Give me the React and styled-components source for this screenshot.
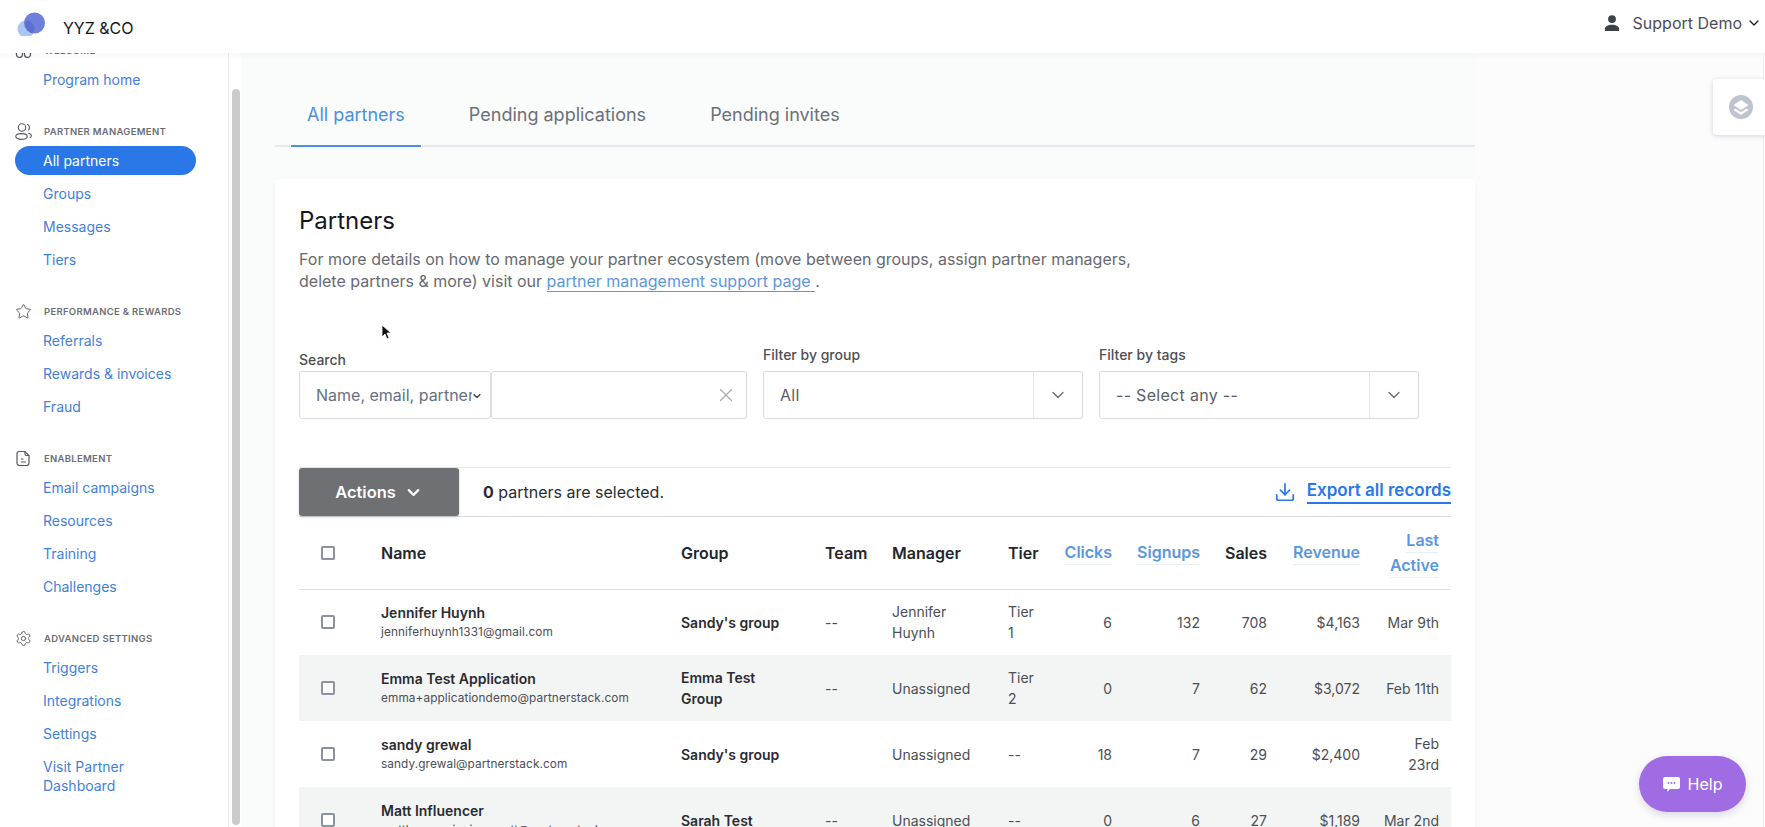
import React from 'react';
import styled, { createGlobalStyle } from 'styled-components';
import { ChevronDown, X, Settings, Star, Download } from 'lucide-react';

const GlobalStyle = createGlobalStyle`
  html, body {
    margin: 0;
    height: 100%;
    overflow: hidden;
    background: #fff;
    font-family: Inter, "Noto Sans", sans-serif;
  }
  * { box-sizing: border-box; }
`;

const Page = styled.div`
  position: relative;
  display: flex;
  flex-direction: column;
  height: 827px;
  overflow: hidden;
`;

const Header = styled.header`
  position: relative;
  z-index: 2;
  flex: 0 0 53px;
  height: 53px;
  display: flex;
  align-items: center;
  justify-content: space-between;
  padding: 3px 3px 0 17px;
  background: #fff;
  box-shadow: 0 1px 8px rgba(30, 40, 70, 0.05);
`;

const Brand = styled.div`
  display: flex;
  align-items: center;
  gap: 16px;
  font-size: 16px;
  color: #15171c;
`;

const LogoSvg = styled.svg`
  margin-bottom: 10px;
`;

const UserMenu = styled.div`
  display: flex;
  align-items: center;
  align-self: flex-start;
  height: 46px;
  margin-top: -3px;
  font-size: 16px;
  color: #4a4d55;
  svg:first-child { margin-right: 13px; }
  svg:last-child { margin-left: 4px; color: #222; }
`;

const Body = styled.div`
  flex: 1;
  display: flex;
  min-height: 0;
`;

const Sidebar = styled.aside`
  flex: 0 0 229px;
  overflow: hidden;
  background: #fff;
  border-right: 1px solid #e8eaee;
`;

const SideInner = styled.div`
  margin-top: -11px;
`;

const SideSection = styled.section`
  margin-bottom: 29px;
`;

const SideHeading = styled.div`
  display: flex;
  align-items: center;
  gap: 12px;
  height: 16px;
  padding-left: 15px;
  margin-bottom: 7px;
  font-size: 9.5px;
  font-weight: 600;
  letter-spacing: 0.3px;
  text-transform: uppercase;
  color: #6b6e75;
  svg { flex: none; color: #55585f; }
`;

const NavItem = styled.a`
  display: block;
  width: 181px;
  margin: 0 0 4px 15px;
  padding: 5px 14px 5px 28px;
  border-radius: 15px;
  font-size: 14px;
  line-height: 19px;
  color: ${(p) => (p.$active ? '#fff' : '#3f7fdc')};
  background: ${(p) => (p.$active ? '#2a78e8' : 'transparent')};
`;

const ScrollTrack = styled.div`
  flex: 0 0 12px;
  padding: 36px 1px 2px 3px;
  background: #fff;
  &::before {
    content: '';
    display: block;
    height: 100%;
    border-radius: 4px;
    background: #cbcbcb;
  }
`;

const Main = styled.main`
  flex: 1;
  min-width: 0;
  display: flex;
  margin-right: 1px;
  background: #fcfcfd;
  border-right: 1px solid #eceef1;
`;

const Content = styled.div`
  flex: 0 0 1234px;
  padding: 0 0 0 34px;
  background: #fafbfb;
`;

const Tabs = styled.nav`
  display: flex;
  height: 94px;
  align-items: flex-end;
  width: 1200px;
  padding-left: 16px;
  border-bottom: 2px solid #e6e9ef;
  margin-bottom: 32px;
`;

const Tab = styled.a`
  height: 51px;
  padding: 7px 16px 0;
  margin-right: 32px;
  margin-bottom: -2px;
  font-size: 18px;
  line-height: 24px;
  color: ${(p) => (p.$active ? '#4c8fe0' : '#6d7078')};
  border-bottom: 2px solid ${(p) => (p.$active ? '#4c8fe0' : 'transparent')};
`;

const Card = styled.div`
  width: 1200px;
  padding: 26px 24px 0;
  background: #fff;
  border-radius: 4px;
  box-shadow: 0 1px 6px rgba(30, 40, 70, 0.04);
`;

const Title = styled.h1`
  margin: 0 0 11px;
  font-size: 24px;
  line-height: 32px;
  font-weight: 400;
  color: #15171c;
`;

const Intro = styled.p`
  margin: 0 0 55px;
  width: 860px;
  font-size: 16px;
  line-height: 22px;
  color: #676a71;
  a {
    color: #5c97dd;
    border-bottom: 1px solid #5c97dd;
  }
`;

const Filters = styled.div`
  display: flex;
  align-items: flex-end;
  margin-bottom: 48px;
`;

const Field = styled.div`
  width: ${(p) => p.$width}px;
  margin-right: ${(p) => p.$gap || 0}px;
`;

const FieldLabel = styled.div`
  margin-bottom: ${(p) => p.$below || 8}px;
  font-size: 14px;
  line-height: 16px;
  font-weight: 500;
  color: #4c4f56;
`;

const InputBox = styled.div`
  display: flex;
  align-items: center;
  height: 48px;
  background: #fff;
  border: 1px solid #d9dce2;
  border-radius: 3px;
  color: #5b5e66;
  font-size: 16px;
`;

const SearchSelect = styled(InputBox)`
  position: relative;
  padding: 0 18px 0 16px;
  color: #667085;
  svg {
    position: absolute;
    right: 7px;
    top: 18px;
    color: #333;
  }
`;

const SearchText = styled.span`
  overflow: hidden;
  white-space: nowrap;
`;

const ClearInput = styled(InputBox)`
  justify-content: flex-end;
  padding-right: 9px;
  svg { color: #a9acb2; }
`;

const SelectValue = styled.div`
  flex: 1;
  padding-left: ${(p) => p.$pad}px;
  letter-spacing: 0.3px;
`;

const SelectCaret = styled.div`
  flex: 0 0 49px;
  height: 100%;
  display: flex;
  align-items: center;
  justify-content: center;
  border-left: 1px solid #e2e4e9;
  color: #666a72;
`;

const ActionBar = styled.div`
  display: flex;
  align-items: center;
  height: 50px;
  border-top: 1px solid #e6e9ef;
  border-bottom: 1px solid #d9dce2;
`;

const ActionsButton = styled.button`
  display: flex;
  align-items: center;
  justify-content: center;
  gap: 8px;
  width: 160px;
  height: 48px;
  margin-right: 24px;
  border: 0;
  border-radius: 3px;
  background: #6f7074;
  color: #fff;
  font-family: inherit;
  font-size: 16.5px;
  font-weight: 600;
  box-shadow: 0 1px 3px rgba(0, 0, 0, 0.18);
`;

const Selected = styled.div`
  flex: 1;
  font-size: 16px;
  color: #2a2c31;
  b { font-weight: 700; }
`;

const ExportLink = styled.a`
  display: flex;
  align-items: center;
  gap: 11px;
  font-size: 17px;
  font-weight: 600;
  color: #2a78e8;
  span {
    padding-bottom: 2px;
    border-bottom: 2px solid #2a78e8;
  }
`;

const Table = styled.table`
  width: 1152px;
  table-layout: fixed;
  border-collapse: collapse;
`;

const Th = styled.th`
  height: 72px;
  padding: 0 ${(p) => p.$padRight || 0}px 0 0;
  border-bottom: 1px solid #dfe1e6;
  font-size: 16px;
  line-height: 24px;
  font-weight: 600;
  text-align: ${(p) => (p.$right ? 'right' : 'left')};
  color: ${(p) => (p.$link ? '#5c97dd' : '#24262b')};
`;

const SortLabel = styled.span`
  display: inline-block;
  border-bottom: 1px solid #e7f0f8;
  line-height: 23px;
`;

const Tr = styled.tr`
  height: 66px;
  background: ${(p) => (p.$alt ? '#f3f5f5' : '#fff')};
`;

const Td = styled.td`
  padding: 0 ${(p) => p.$padRight || 0}px 0 ${(p) => p.$padLeft || 0}px;
  font-size: 14px;
  line-height: 21px;
  vertical-align: middle;
  text-align: ${(p) => (p.$right ? 'right' : 'left')};
  font-weight: ${(p) => (p.$bold ? 600 : 400)};
  color: ${(p) => (p.$bold ? '#2a2c31' : '#4b4e55')};
`;

const CheckBox = styled.span`
  display: block;
  width: 14px;
  height: 14px;
  margin-left: 22px;
  border: 2px solid #8b92a0;
  border-radius: 2px;
  background: #fff;
`;

const PartnerName = styled.div`
  font-size: 14px;
  line-height: 20px;
  font-weight: 600;
  color: #2a2c31;
`;

const PartnerEmail = styled.div`
  font-size: 11.8px;
  line-height: 18px;
  letter-spacing: 0.1px;
  color: #4b4e55;
`;

const SideTab = styled.div`
  position: absolute;
  top: 79px;
  right: 0;
  width: 52px;
  height: 56px;
  display: flex;
  align-items: center;
  padding-left: 16px;
  background: #fff;
  border-radius: 3px 0 0 3px;
  box-shadow: 0 1px 5px rgba(30, 40, 70, 0.18);
`;

const HelpButton = styled.button`
  position: absolute;
  right: 19px;
  bottom: 15px;
  width: 107px;
  height: 56px;
  display: flex;
  align-items: center;
  justify-content: center;
  gap: 8px;
  border: 0;
  border-radius: 28px;
  background: #9f6ce3;
  color: #fff;
  font-family: inherit;
  font-size: 16px;
  box-shadow: 0 3px 8px rgba(60, 50, 120, 0.18);
`;

const Pointer = styled.svg`
  position: absolute;
  left: 381px;
  top: 324px;
`;

const LogoMark = () => (
  <LogoSvg width="30" height="26" viewBox="0 0 30 26">
    <circle cx="9" cy="19" r="8.5" fill="#a9c5f2" />
    <circle cx="17.5" cy="13" r="10.5" fill="#6f7fdc" />
    <path d="M8.5 10.5 A8.5 8.5 0 0 1 17.5 19 A8.5 8.5 0 0 1 15.5 23.4 A10.5 10.5 0 0 1 8.5 10.5 Z" fill="#5a70cf" />
  </LogoSvg>
);

const PersonIcon = () => (
  <svg width="16" height="16" viewBox="0 0 18 18" fill="#3f4248">
    <circle cx="9" cy="4.6" r="4.4" />
    <path d="M1 18v-2.6C1 12.4 5.6 11 9 11s8 1.4 8 4.4V18z" />
  </svg>
);

const LayersBadge = () => (
  <svg width="24" height="24" viewBox="0 0 24 24">
    <circle cx="12" cy="12" r="12" fill="#bdc4cf" />
    <path d="M12 5 L19.5 10 L12 15 L4.5 10 Z" fill="#fff" />
    <path d="M6.5 13.5 L12 17.2 L17.5 13.5 L19.5 15 L12 20 L4.5 15 Z" fill="#fff" />
  </svg>
);

const ChatIcon = () => (
  <svg width="17" height="15" viewBox="0 0 17 15">
    <path d="M2 0h13a2 2 0 0 1 2 2v8a2 2 0 0 1-2 2H7l-2.5 3v-3H2a2 2 0 0 1-2-2V2a2 2 0 0 1 2-2z" fill="#fff" />
    <circle cx="5.5" cy="6" r="1" fill="#9f6ce3" />
    <circle cx="8.5" cy="6" r="1" fill="#9f6ce3" />
    <circle cx="11.5" cy="6" r="1" fill="#9f6ce3" />
  </svg>
);

const WelcomeIcon = () => (
  <svg width="17" height="16" viewBox="0 0 17 16" fill="none" stroke="#55585f" strokeWidth="1.3">
    <path d="M1.5 1h6v11.5a3 3 0 0 1-6 0zM9.5 1h6v11.5a3 3 0 0 1-6 0z" />
    <path d="M7.5 8h2" />
  </svg>
);

const PeopleIcon = () => (
  <svg width="17" height="17" viewBox="0 0 17 17" fill="none" stroke="#55585f" strokeWidth="1.1">
    <circle cx="7" cy="4.5" r="3.7" />
    <ellipse cx="6.5" cy="13.5" rx="5.7" ry="2.9" />
    <path d="M12 1.2a3.6 3.6 0 0 1 1.2 6.2M13.5 10.2c1.8.5 2.9 1.5 2.9 2.6 0 .8-.6 1.6-1.7 2.1" />
  </svg>
);

const NoteIcon = () => (
  <svg width="17" height="17" viewBox="0 0 17 17" fill="none" stroke="#55585f" strokeWidth="1.2">
    <path d="M4 1.5h6l4 4V13a2.5 2.5 0 0 1-2.5 2.5h-7A2.5 2.5 0 0 1 2 13V3.5a2 2 0 0 1 2-2z" />
    <path d="M10 1.5v2.2A1.8 1.8 0 0 0 11.8 5.5H14M6 9h2.5M6 12h5" />
  </svg>
);

const sections = [
  {
    title: 'Welcome',
    icon: <WelcomeIcon />,
    items: ['Program home'],
  },
  {
    title: 'Partner management',
    icon: <PeopleIcon />,
    items: ['All partners', 'Groups', 'Messages', 'Tiers'],
  },
  {
    title: 'Performance & rewards',
    icon: <Star size={17} strokeWidth={1.3} />,
    items: ['Referrals', 'Rewards & invoices', 'Fraud'],
  },
  {
    title: 'Enablement',
    icon: <NoteIcon />,
    items: ['Email campaigns', 'Resources', 'Training', 'Challenges'],
  },
  {
    title: 'Advanced settings',
    icon: <Settings size={17} strokeWidth={1.3} />,
    items: ['Triggers', 'Integrations', 'Settings', 'Visit Partner Dashboard'],
  },
];

const partners = [
  {
    name: 'Jennifer Huynh',
    email: 'jenniferhuynh1331@gmail.com',
    group: "Sandy's group",
    team: '--',
    manager: 'Jennifer Huynh',
    tier: 'Tier 1',
    clicks: 6,
    signups: 132,
    sales: 708,
    revenue: '$4,163',
    active: 'Mar 9th',
  },
  {
    name: 'Emma Test Application',
    email: 'emma+applicationdemo@partnerstack.com',
    group: 'Emma Test Group',
    team: '--',
    manager: 'Unassigned',
    tier: 'Tier 2',
    clicks: 0,
    signups: 7,
    sales: 62,
    revenue: '$3,072',
    active: 'Feb 11th',
  },
  {
    name: 'sandy grewal',
    email: 'sandy.grewal@partnerstack.com',
    group: "Sandy's group",
    team: '',
    manager: 'Unassigned',
    tier: '--',
    clicks: 18,
    signups: 7,
    sales: 29,
    revenue: '$2,400',
    active: 'Feb 23rd',
  },
  {
    name: 'Matt Influencer',
    email: 'matthew.pasienisz+matt@partnerstack.com',
    group: 'Sarah Test',
    team: '--',
    manager: 'Unassigned',
    tier: '--',
    clicks: 0,
    signups: 6,
    sales: 27,
    revenue: '$1,189',
    active: 'Mar 2nd',
  },
];

const App = () => (
  <Page>
    <GlobalStyle />
    <Header>
      <Brand>
        <LogoMark />
        YYZ &amp;CO
      </Brand>
      <UserMenu>
        <PersonIcon />
        Support Demo
        <ChevronDown size={16} strokeWidth={2} />
      </UserMenu>
    </Header>
    <Body>
      <Sidebar>
        <SideInner>
          {sections.map((section) => (
            <SideSection key={section.title}>
              <SideHeading>
                {section.icon}
                {section.title}
              </SideHeading>
              {section.items.map((item) => (
                <NavItem key={item} $active={item === 'All partners'}>
                  {item}
                </NavItem>
              ))}
            </SideSection>
          ))}
        </SideInner>
      </Sidebar>
      <ScrollTrack />
      <Main>
        <Content>
          <Tabs>
            <Tab $active>All partners</Tab>
            <Tab>Pending applications</Tab>
            <Tab>Pending invites</Tab>
          </Tabs>
          <Card>
            <Title>Partners</Title>
            <Intro>
              For more details on how to manage your partner ecosystem (move between groups, assign
              partner managers, delete partners &amp; more) visit our{' '}
              <a>partner management support page </a> .
            </Intro>
            <Filters>
              <Field $width={192}>
                <FieldLabel $below={3}>Search</FieldLabel>
                <SearchSelect>
                  <SearchText>Name, email, partner key</SearchText>
                  <ChevronDown size={12} strokeWidth={2.2} />
                </SearchSelect>
              </Field>
              <Field $width={256} $gap={16}>
                <ClearInput>
                  <X size={22} strokeWidth={1.3} />
                </ClearInput>
              </Field>
              <Field $width={320} $gap={16}>
                <FieldLabel>Filter by group</FieldLabel>
                <InputBox>
                  <SelectValue $pad={16}>All</SelectValue>
                  <SelectCaret>
                    <ChevronDown size={20} strokeWidth={1.6} />
                  </SelectCaret>
                </InputBox>
              </Field>
              <Field $width={320}>
                <FieldLabel>Filter by tags</FieldLabel>
                <InputBox>
                  <SelectValue $pad={16}>-- Select any --</SelectValue>
                  <SelectCaret>
                    <ChevronDown size={20} strokeWidth={1.6} />
                  </SelectCaret>
                </InputBox>
              </Field>
            </Filters>
            <ActionBar>
              <ActionsButton>
                Actions
                <ChevronDown size={19} strokeWidth={2.8} />
              </ActionsButton>
              <Selected>
                <b>0</b> partners are selected.
              </Selected>
              <ExportLink>
                <Download size={22} strokeWidth={1.9} />
                <span>Export all records</span>
              </ExportLink>
            </ActionBar>
            <Table>
              <colgroup>
                <col style={{ width: 82 }} />
                <col style={{ width: 300 }} />
                <col style={{ width: 144 }} />
                <col style={{ width: 67 }} />
                <col style={{ width: 116 }} />
                <col style={{ width: 56 }} />
                <col style={{ width: 48 }} />
                <col style={{ width: 88 }} />
                <col style={{ width: 67 }} />
                <col style={{ width: 93 }} />
                <col style={{ width: 91 }} />
              </colgroup>
              <thead>
                <tr>
                  <Th>
                    <CheckBox />
                  </Th>
                  <Th>Name</Th>
                  <Th>Group</Th>
                  <Th>Team</Th>
                  <Th>Manager</Th>
                  <Th>Tier</Th>
                  <Th $right $link>
                    <SortLabel>Clicks</SortLabel>
                  </Th>
                  <Th $right $link>
                    <SortLabel>Signups</SortLabel>
                  </Th>
                  <Th $right>Sales</Th>
                  <Th $right $link>
                    <SortLabel>Revenue</SortLabel>
                  </Th>
                  <Th $right $link $padRight={12}>
                    <SortLabel>Last</SortLabel>
                    <br />
                    <SortLabel>Active</SortLabel>
                  </Th>
                </tr>
              </thead>
              <tbody>
                {partners.map((partner, i) => (
                  <Tr key={partner.email} $alt={i % 2 === 1}>
                    <Td>
                      <CheckBox />
                    </Td>
                    <Td>
                      <PartnerName>{partner.name}</PartnerName>
                      <PartnerEmail>{partner.email}</PartnerEmail>
                    </Td>
                    <Td $bold $padRight={30}>
                      {partner.group}
                    </Td>
                    <Td>{partner.team}</Td>
                    <Td $padRight={20}>{partner.manager}</Td>
                    <Td $padRight={24}>{partner.tier}</Td>
                    <Td $right>{partner.clicks}</Td>
                    <Td $right>{partner.signups}</Td>
                    <Td $right>{partner.sales}</Td>
                    <Td $right>{partner.revenue}</Td>
                    <Td $right $padLeft={23} $padRight={12}>
                      {partner.active}
                    </Td>
                  </Tr>
                ))}
              </tbody>
            </Table>
          </Card>
        </Content>
      </Main>
    </Body>
    <SideTab>
      <LayersBadge />
    </SideTab>
    <HelpButton>
      <ChatIcon />
      Help
    </HelpButton>
    <Pointer width="12" height="17" viewBox="0 0 12 17">
      <path d="M1 1v12l3-3 2 5 2-1-2-5h4z" fill="#111" stroke="#fff" strokeWidth="0.8" />
    </Pointer>
  </Page>
);

export default App;
